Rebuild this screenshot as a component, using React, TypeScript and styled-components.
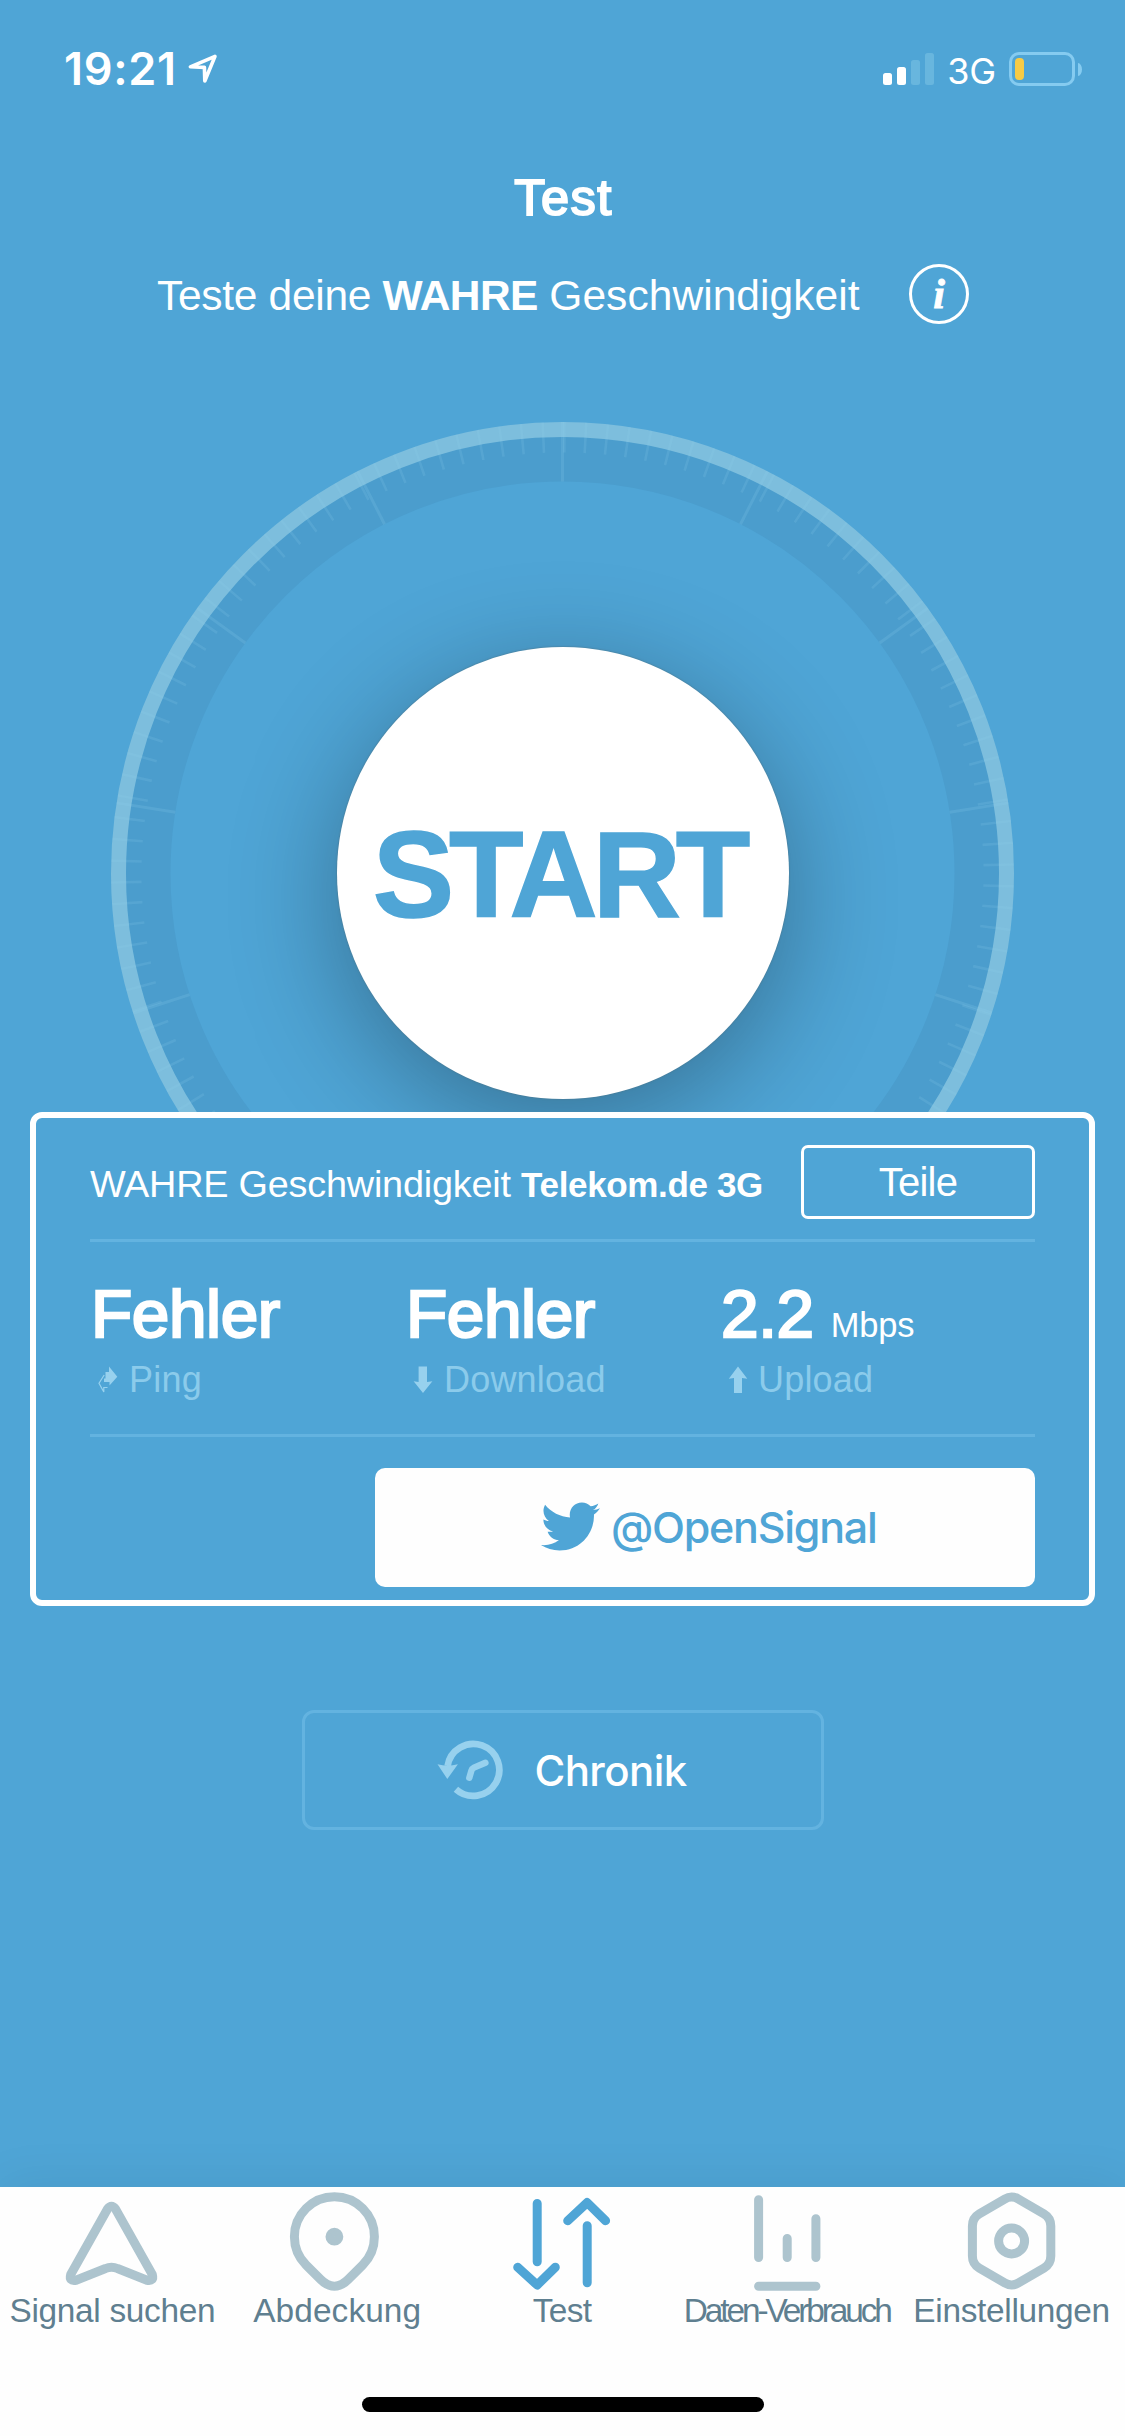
import React from "react";
import styled, { createGlobalStyle } from "styled-components";
import { FaTwitter } from "react-icons/fa";

const color = {
  sky: "#4fa5d6",
  line: "#63b3e0",
  soft: "#97d1ee",
  softText: "#8bcbeb",
  paper: "#fefefe",
  tabIcon: "#adc4ce",
  tabLabel: "#5f7f90",
};

const GlobalStyle = createGlobalStyle`
  * { box-sizing: border-box; }
  body { margin: 0; background: ${color.sky}; }
  button { font: inherit; color: inherit; margin: 0; padding: 0; border: 0; background: none; }
  svg { display: block; flex: none; }
`;

const Screen = styled.div`
  display: flex;
  flex-direction: column;
  width: 1125px;
  height: 2436px;
  overflow: hidden;
  background: ${color.sky};
  color: #fff;
  font-family: "Liberation Sans", Arial, sans-serif;
  white-space: nowrap;
`;

/* ---------- status bar ---------- */

const StatusBar = styled.header`
  display: flex;
  align-items: center;
  height: 138px;
  padding: 0 43px 0 64px;
  font-family: Inter, sans-serif;
`;

const Clock = styled.span`
  font-size: 45px;
  font-weight: 600;
  letter-spacing: 0.7px;
  line-height: 60px;
`;

const LocationMark = styled.svg`
  margin-left: 10px;
`;

const StatusRight = styled.div`
  display: flex;
  align-items: center;
  margin-left: auto;
`;

const SignalBars = styled.div`
  display: flex;
  align-items: flex-end;
  gap: 5px;
  height: 32px;
`;

const SignalBar = styled.i<{ $height: number; $on: boolean }>`
  width: 9px;
  height: ${(p) => p.$height}px;
  border-radius: 2.5px;
  background: ${(p) => (p.$on ? "#fff" : "#68b6de")};
`;

const Network = styled.span`
  margin: 3px 13px 0 13px;
  font-size: 36px;
  letter-spacing: -0.2px;
  line-height: 44px;
`;

const BatteryBody = styled.div`
  width: 66px;
  height: 34px;
  padding: 3px;
  border: 3px solid #85cbf0;
  border-radius: 10px;
`;

const BatteryLevel = styled.i`
  display: block;
  width: 9px;
  height: 22px;
  border-radius: 4px;
  background: #f7cb45;
`;

const BatteryNub = styled.i`
  width: 4px;
  height: 13px;
  margin-left: 3px;
  border-radius: 0 4px 4px 0 / 0 6.5px 6.5px 0;
  background: #85cbf0;
`;

/* ---------- heading ---------- */

const Title = styled.h1`
  margin: 0;
  padding-left: 2px;
  font-size: 50.5px;
  font-weight: 400;
  letter-spacing: 1.5px;
  line-height: 120px;
  text-align: center;
  -webkit-text-stroke: 2px #fff;
`;

const SubtitleRow = styled.div`
  display: flex;
  align-items: center;
  justify-content: space-between;
  height: 72px;
  padding: 0 156px 0 157px;
`;

const Subtitle = styled.p`
  margin: 4px 0 0;
  font-size: 42.5px;
  letter-spacing: -0.3px;
  line-height: 60px;

  b { letter-spacing: -0.6px; }
  span { letter-spacing: 0.05px; }
`;

const InfoButton = styled.button`
  width: 60px;
  height: 60px;
  border: 3px solid #fff;
  border-radius: 50%;
  font: italic 700 42px/53px "Liberation Serif", serif;
  text-align: center;
  -webkit-text-stroke: 0.8px #fff;
`;

/* ---------- dial ---------- */

const DialArea = styled.section`
  display: flex;
  justify-content: center;
  height: 782px;
  padding-top: 92px;
  overflow: hidden;
`;

const Dial = styled.div`
  display: grid;
  place-items: center;
  width: 903px;
  height: 903px;

  > * { grid-area: 1 / 1; }
`;

const StartButton = styled.button`
  display: flex;
  align-items: center;
  justify-content: center;
  width: 452px;
  height: 452px;
  margin-bottom: 2px;
  padding: 5px 7px 0 0;
  border-radius: 50%;
  background: #fff;
  box-shadow: 0 0 1px 1px rgba(80, 120, 140, 0.4), 0 24px 110px rgba(0, 0, 0, 0.31);
  color: ${color.sky};
  font-size: 122px;
  font-weight: 700;
  letter-spacing: -5px;
  line-height: 140px;
  -webkit-text-stroke: 1.5px ${color.sky};
`;

/* ---------- result card ---------- */

const Card = styled.section`
  display: flex;
  flex-direction: column;
  width: 1065px;
  height: 494px;
  margin: 0 30px;
  padding: 0 54px;
  border: 6px solid #fff;
  border-radius: 12px;
  background: ${color.sky};
`;

const CardHeader = styled.div`
  display: flex;
  align-items: center;
  justify-content: space-between;
  height: 121px;
  padding: 27px 0 20px;
`;

const CardTitle = styled.p`
  margin: 5px 0 0;
  font-size: 37.8px;
  letter-spacing: -0.2px;
  line-height: 50px;

  b {
    font-size: 35px;
    letter-spacing: -0.35px;
  }
`;

const ShareButton = styled.button`
  width: 234px;
  height: 74px;
  border: 3px solid #fff;
  border-radius: 7px;
  font-size: 40px;
  letter-spacing: -0.8px;
  line-height: 68px;
  text-align: center;
`;

const Divider = styled.hr`
  width: 100%;
  height: 3px;
  margin: 0;
  border: 0;
  background: ${color.line};
`;

const Stats = styled.div`
  display: grid;
  grid-template-columns: repeat(3, 1fr);
  height: 192px;
  padding-top: 32px;
`;

const StatValue = styled.div`
  height: 80px;
  padding-left: 1px;
  font-size: 67.5px;
  letter-spacing: -0.4px;
  line-height: 80px;
  -webkit-text-stroke: 2.4px #fff;
`;

const Unit = styled.span`
  margin-left: 17px;
  font-size: 34.5px;
  letter-spacing: -0.2px;
  line-height: 1;
  -webkit-text-stroke: 0;
`;

const StatLabel = styled.div`
  display: flex;
  align-items: center;
  color: ${color.softText};
  font-size: 36px;
  letter-spacing: 0.2px;
  line-height: 52px;
`;

const TwitterButton = styled.button`
  display: flex;
  align-items: center;
  align-self: flex-end;
  gap: 11px;
  width: 660px;
  height: 119px;
  margin-top: 31px;
  padding: 0 0 2px 166px;
  border-radius: 10px;
  background: ${color.paper};
  color: ${color.sky};
  font-family: Inter, sans-serif;
  font-size: 43px;
  font-weight: 500;
  letter-spacing: -1.25px;
`;

const HistoryButton = styled.button`
  display: flex;
  align-items: center;
  align-self: center;
  gap: 32px;
  width: 522px;
  height: 120px;
  margin-top: 104px;
  padding-left: 132px;
  border: 3px solid ${color.line};
  border-radius: 12px;
  font-family: Inter, sans-serif;
  font-size: 42px;
  font-weight: 500;
  letter-spacing: -0.6px;
`;

/* ---------- tab bar ---------- */

const TabBar = styled.nav`
  height: 249px;
  margin-top: auto;
  background: ${color.paper};
  box-shadow: 0 -2px 50px rgba(0, 0, 0, 0.07);
`;

const Tabs = styled.div`
  display: grid;
  grid-template-columns: repeat(5, 1fr);
  padding-right: 1px;
`;

const Tab = styled.button<{ $active?: boolean }>`
  display: flex;
  flex-direction: column;
  align-items: center;

  svg {
    fill: none;
    stroke: ${(p) => (p.$active ? color.sky : color.tabIcon)};
    stroke-width: 9;
    stroke-linecap: round;
    stroke-linejoin: round;
  }
`;

const TabLabel = styled.span<{ $tracking: number }>`
  color: ${color.tabLabel};
  font-size: 33.4px;
  letter-spacing: ${(p) => p.$tracking}px;
  line-height: 40px;
`;

const HomeIndicator = styled.div`
  width: 402px;
  height: 15px;
  margin: 66px auto 0;
  border-radius: 7.5px;
  background: #000;
`;

/* ---------- drawings ---------- */

const C = 451.5;

function tick(deg: number, inner: number) {
  const a = (deg * Math.PI) / 180;
  const s = Math.sin(a);
  const c = Math.cos(a);
  return `M${C + s * C} ${C - c * C}L${C + s * inner} ${C - c * inner}`;
}

const minorTicks = Array.from({ length: 130 }, (_, i) => tick(0.25 + (i * 360) / 130, 421)).join("");
const majorTicks = Array.from({ length: 9 }, (_, i) => tick((i - 4) * 27, 392)).join("");

const DialFace = () => (
  <svg width="903" height="903" viewBox="0 0 903 903" fill="none">
    <circle cx={C} cy={C} r="414.5" stroke="#4b9dcd" strokeWidth="45" />
    <circle cx={C} cy={C} r="444" stroke="#7dbedd" strokeWidth="15" />
    <path d={minorTicks} stroke="#8fd0ec" strokeOpacity="0.17" strokeWidth="2.6" />
    <path d={majorTicks} stroke="#8fd0ec" strokeOpacity="0.18" strokeWidth="3" />
  </svg>
);

const icons = {
  find: <path d="M47.5 22Q51.5 16.6 55.5 22L92.3 87.5Q94.3 94.6 87 93.3L57.5 81.5Q51.5 78.8 45.5 81.5L16 93.3Q8.7 94.6 10.7 87.5Z" />,
  coverage: (
    <>
      <path d="M21.1 78A40 40 0 1 1 77.7 78L63.4 92.3Q49.4 106.3 35.4 92.3Z" />
      <circle cx="49.4" cy="49.7" r="4.4" />
    </>
  ),
  test: <path d="M27.2 16.5V74.8M7.7 80.2L27.2 98L45.3 80.2M77.2 38.8V95.8M57.7 33.7L77.2 15.6L95.6 33.7" />,
  usage: <path d="M23.6 12.7V70.6M52.2 51.4V70.6M80.9 31.7V70.6M23.6 99.3H80.9" />,
  settings: (
    <>
      <path d="M44.7 12.1Q51.6 8 58.5 12.1L83.9 26.9Q90.8 31 90.8 39V69Q90.8 77 83.9 81.1L58.5 95.9Q51.6 100 44.7 95.9L19.3 81.1Q12.4 77 12.4 69V39Q12.4 31 19.3 26.9Z" />
      <circle cx="51.6" cy="54" r="13" />
    </>
  ),
};

const PingIcon = () => (
  <svg width="39" height="28" viewBox="0 0 39 28" fill={color.soft}>
    <path d="M19 .5L27.3 10.7L19.5 19.5V16H14V12.5H15.5V6H19Z" />
    <path d="M14.2 9L9 17.3L13.8 26V21.5H17.5" fill="none" stroke={color.soft} strokeWidth="1.2" />
  </svg>
);

const DownIcon = () => (
  <svg width="39" height="28" viewBox="0 0 39 28" fill={color.soft}>
    <path d="M13.6 .5H22V16L27.4 15.3L18 27L8.6 15.3L13.6 16Z" />
  </svg>
);

const UpIcon = () => (
  <svg width="38" height="28" viewBox="0 0 38 28" fill={color.soft}>
    <path d="M18 .5L27.3 12.7L22 12V27H14V12L8.8 12.7Z" />
  </svg>
);

const HistoryIcon = () => (
  <svg width="66" height="62" viewBox="0 0 66 62" fill="none" stroke={color.soft} strokeWidth="6.7">
    <path d="M18.9 50.2A26 26 0 1 0 10.6 27" />
    <path d="M48.4 23.8L37 28.6Q35 29.6 34.4 31.6L32.3 38.8" strokeLinecap="round" strokeWidth="6.4" />
    <path d="M.5 25.3Q10.5 28 20.9 25.3L10.3 40Z" fill={color.soft} stroke="none" />
  </svg>
);

const tabs: { id: keyof typeof icons; label: string; tracking: number; active?: boolean }[] = [
  { id: "find", label: "Signal suchen", tracking: -0.3 },
  { id: "coverage", label: "Abdeckung", tracking: 0.1 },
  { id: "test", label: "Test", tracking: -0.7, active: true },
  { id: "usage", label: "Daten-Verbrauch", tracking: -3.1 },
  { id: "settings", label: "Einstellungen", tracking: -0.3 },
];

export default function App() {
  return (
    <>
      <GlobalStyle />
      <Screen>
        <StatusBar>
          <Clock>19:21</Clock>
          <LocationMark width="32" height="32" viewBox="0 0 32 32" fill="none" stroke="#fff" strokeWidth="3.6" strokeLinejoin="round">
            <path d="M28 3.4L3.4 13.8L17.4 14.4L17.8 28Z" />
          </LocationMark>
          <StatusRight>
            <SignalBars>
              {[12, 18, 25, 32].map((h, i) => (
                <SignalBar key={h} $height={h} $on={i < 2} />
              ))}
            </SignalBars>
            <Network>3G</Network>
            <BatteryBody>
              <BatteryLevel />
            </BatteryBody>
            <BatteryNub />
          </StatusRight>
        </StatusBar>

        <Title>Test</Title>
        <SubtitleRow>
          <Subtitle>
            Teste deine <b>WAHRE</b> <span>Geschwindigkeit</span>
          </Subtitle>
          <InfoButton>i</InfoButton>
        </SubtitleRow>

        <DialArea>
          <Dial>
            <DialFace />
            <StartButton>START</StartButton>
          </Dial>
        </DialArea>

        <Card>
          <CardHeader>
            <CardTitle>
              WAHRE Geschwindigkeit <b>Telekom.de 3G</b>
            </CardTitle>
            <ShareButton>Teile</ShareButton>
          </CardHeader>
          <Divider />
          <Stats>
            <div>
              <StatValue>Fehler</StatValue>
              <StatLabel><PingIcon />Ping</StatLabel>
            </div>
            <div>
              <StatValue>Fehler</StatValue>
              <StatLabel><DownIcon />Download</StatLabel>
            </div>
            <div>
              <StatValue>2.2<Unit>Mbps</Unit></StatValue>
              <StatLabel><UpIcon />Upload</StatLabel>
            </div>
          </Stats>
          <Divider />
          <TwitterButton>
            <FaTwitter size={59} />
            @OpenSignal
          </TwitterButton>
        </Card>

        <HistoryButton>
          <HistoryIcon />
          Chronik
        </HistoryButton>

        <TabBar>
          <Tabs>
            {tabs.map((t) => (
              <Tab key={t.id} $active={t.active}>
                <svg width="104" height="104" viewBox="0 0 104 104">{icons[t.id]}</svg>
                <TabLabel $tracking={t.tracking}>{t.label}</TabLabel>
              </Tab>
            ))}
          </Tabs>
          <HomeIndicator />
        </TabBar>
      </Screen>
    </>
  );
}
